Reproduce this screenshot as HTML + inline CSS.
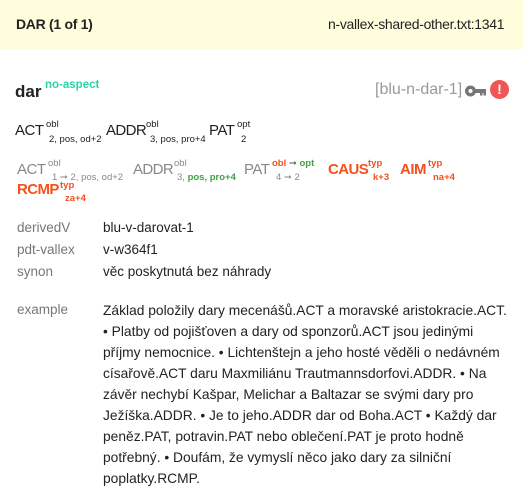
<!DOCTYPE html>
<html><head><meta charset="utf-8"><style>
*{margin:0;padding:0;box-sizing:border-box}
body{width:523px;height:497px;background:#fff;font-family:"Liberation Sans",sans-serif;color:#222;position:relative;overflow:hidden}
.hdr{position:absolute;left:0;top:0;width:523px;height:49px;background:#fffddc}
.a{position:absolute;white-space:nowrap}
.g{color:#888}
.r{color:#f4511e;font-weight:bold}
.gr{color:#43a047;font-weight:bold}
.lbl{color:#777;font-size:13.5px}
.val{font-size:13.5px;color:#222}
</style></head><body>
<div class="hdr"></div>
<div class="a" style="left:16px;top:16px;font-size:14px;font-weight:bold;letter-spacing:-0.3px">DAR (1 of 1)</div>
<div class="a" style="left:328px;top:16px;font-size:14px;letter-spacing:-0.3px">n-vallex-shared-other.txt:1341</div>

<div class="a" style="left:15px;top:82px;font-size:17px;font-weight:bold">dar</div>
<div class="a" style="left:45px;top:79px;font-size:11.5px;font-weight:bold;color:#2bd4a8">no-aspect</div>
<div class="a g" style="left:375px;top:81px;font-size:16px;color:#999">[blu-n-dar-1]</div>
<svg class="a" style="left:465px;top:84px" width="22" height="14" viewBox="0 0 22 14"><circle cx="5.5" cy="7" r="5.5" fill="#777"/><circle cx="5.5" cy="7" r="2" fill="#fff"/><rect x="9" y="5" width="12" height="4" fill="#777"/><rect x="15" y="8" width="2.5" height="3.5" fill="#777"/><rect x="18.5" y="8" width="2.5" height="3.5" fill="#777"/></svg>
<div class="a" style="left:490px;top:80px;width:19px;height:19px;border-radius:50%;background:#f25555;color:#fff;font-weight:bold;font-size:14px;text-align:center;line-height:19px">!</div>

<div class="a" style="left:15px;top:122px;font-size:15px;letter-spacing:-0.5px">ACT</div>
<div class="a" style="left:46px;top:119px;font-size:9.5px">obl</div>
<div class="a" style="left:49px;top:134px;font-size:9.5px">2, pos, od+2</div>
<div class="a" style="left:106px;top:122px;font-size:15px;letter-spacing:-0.6px">ADDR</div>
<div class="a" style="left:146px;top:119px;font-size:9.5px">obl</div>
<div class="a" style="left:150px;top:134px;font-size:9.5px">3, pos, pro+4</div>
<div class="a" style="left:209px;top:122px;font-size:15px;letter-spacing:-0.5px">PAT</div>
<div class="a" style="left:237px;top:119px;font-size:9.5px">opt</div>
<div class="a" style="left:241px;top:134px;font-size:9.5px">2</div>

<div class="a g" style="left:17px;top:161px;font-size:15px;letter-spacing:-0.5px">ACT</div>
<div class="a g" style="left:48px;top:158px;font-size:9.5px">obl</div>
<div class="a g" style="left:52px;top:172px;font-size:9.5px">1 ➞ 2, pos, od+2</div>
<div class="a g" style="left:133px;top:161px;font-size:15px;letter-spacing:-0.6px">ADDR</div>
<div class="a g" style="left:174px;top:158px;font-size:9.5px">obl</div>
<div class="a g" style="left:177px;top:172px;font-size:9.5px">3, <span class="gr">pos, pro+4</span></div>
<div class="a g" style="left:244px;top:161px;font-size:15px;letter-spacing:-0.5px">PAT</div>
<div class="a" style="left:272px;top:158px;font-size:9.5px"><span class="r">obl</span> <span style="color:#555">➞</span> <span class="gr">opt</span></div>
<div class="a g" style="left:276px;top:172px;font-size:9.5px">4 ➞ 2</div>
<div class="a r" style="left:328px;top:161px;font-size:15px;letter-spacing:-0.6px">CAUS</div>
<div class="a r" style="left:368px;top:158px;font-size:9.5px">typ</div>
<div class="a r" style="left:373px;top:172px;font-size:9.5px">k+3</div>
<div class="a r" style="left:400px;top:161px;font-size:15px;letter-spacing:-0.5px">AIM</div>
<div class="a r" style="left:428px;top:158px;font-size:9.5px">typ</div>
<div class="a r" style="left:433px;top:172px;font-size:9.5px">na+4</div>
<div class="a r" style="left:17px;top:181px;font-size:15px;letter-spacing:-0.6px">RCMP</div>
<div class="a r" style="left:60px;top:180px;font-size:9.5px">typ</div>
<div class="a r" style="left:65px;top:193px;font-size:9.5px">za+4</div>

<div class="a lbl" style="left:17px;top:220px">derivedV</div>
<div class="a val" style="left:103px;top:220px">blu-v-darovat-1</div>
<div class="a lbl" style="left:17px;top:242px">pdt-vallex</div>
<div class="a val" style="left:103px;top:242px">v-w364f1</div>
<div class="a lbl" style="left:17px;top:264px">synon</div>
<div class="a val" style="left:103px;top:264px">věc poskytnutá bez náhrady</div>
<div class="a lbl" style="left:17px;top:302px">example</div>
<div class="a val" style="left:103px;top:300px;line-height:21px;font-size:13.8px">Základ položily dary mecenášů.ACT a moravské aristokracie.ACT.<br>• Platby od pojišťoven a dary od sponzorů.ACT jsou jedinými<br>příjmy nemocnice. • Lichtenštejn a jeho hosté věděli o nedávném<br>císařově.ACT daru Maxmiliánu Trautmannsdorfovi.ADDR. • Na<br>závěr nechybí Kašpar, Melichar a Baltazar se svými dary pro<br>Ježíška.ADDR. • Je to jeho.ADDR dar od Boha.ACT • Každý dar<br>peněz.PAT, potravin.PAT nebo oblečení.PAT je proto hodně<br>potřebný. • Doufám, že vymyslí něco jako dary za silniční<br>poplatky.RCMP.</div>
</body></html>
